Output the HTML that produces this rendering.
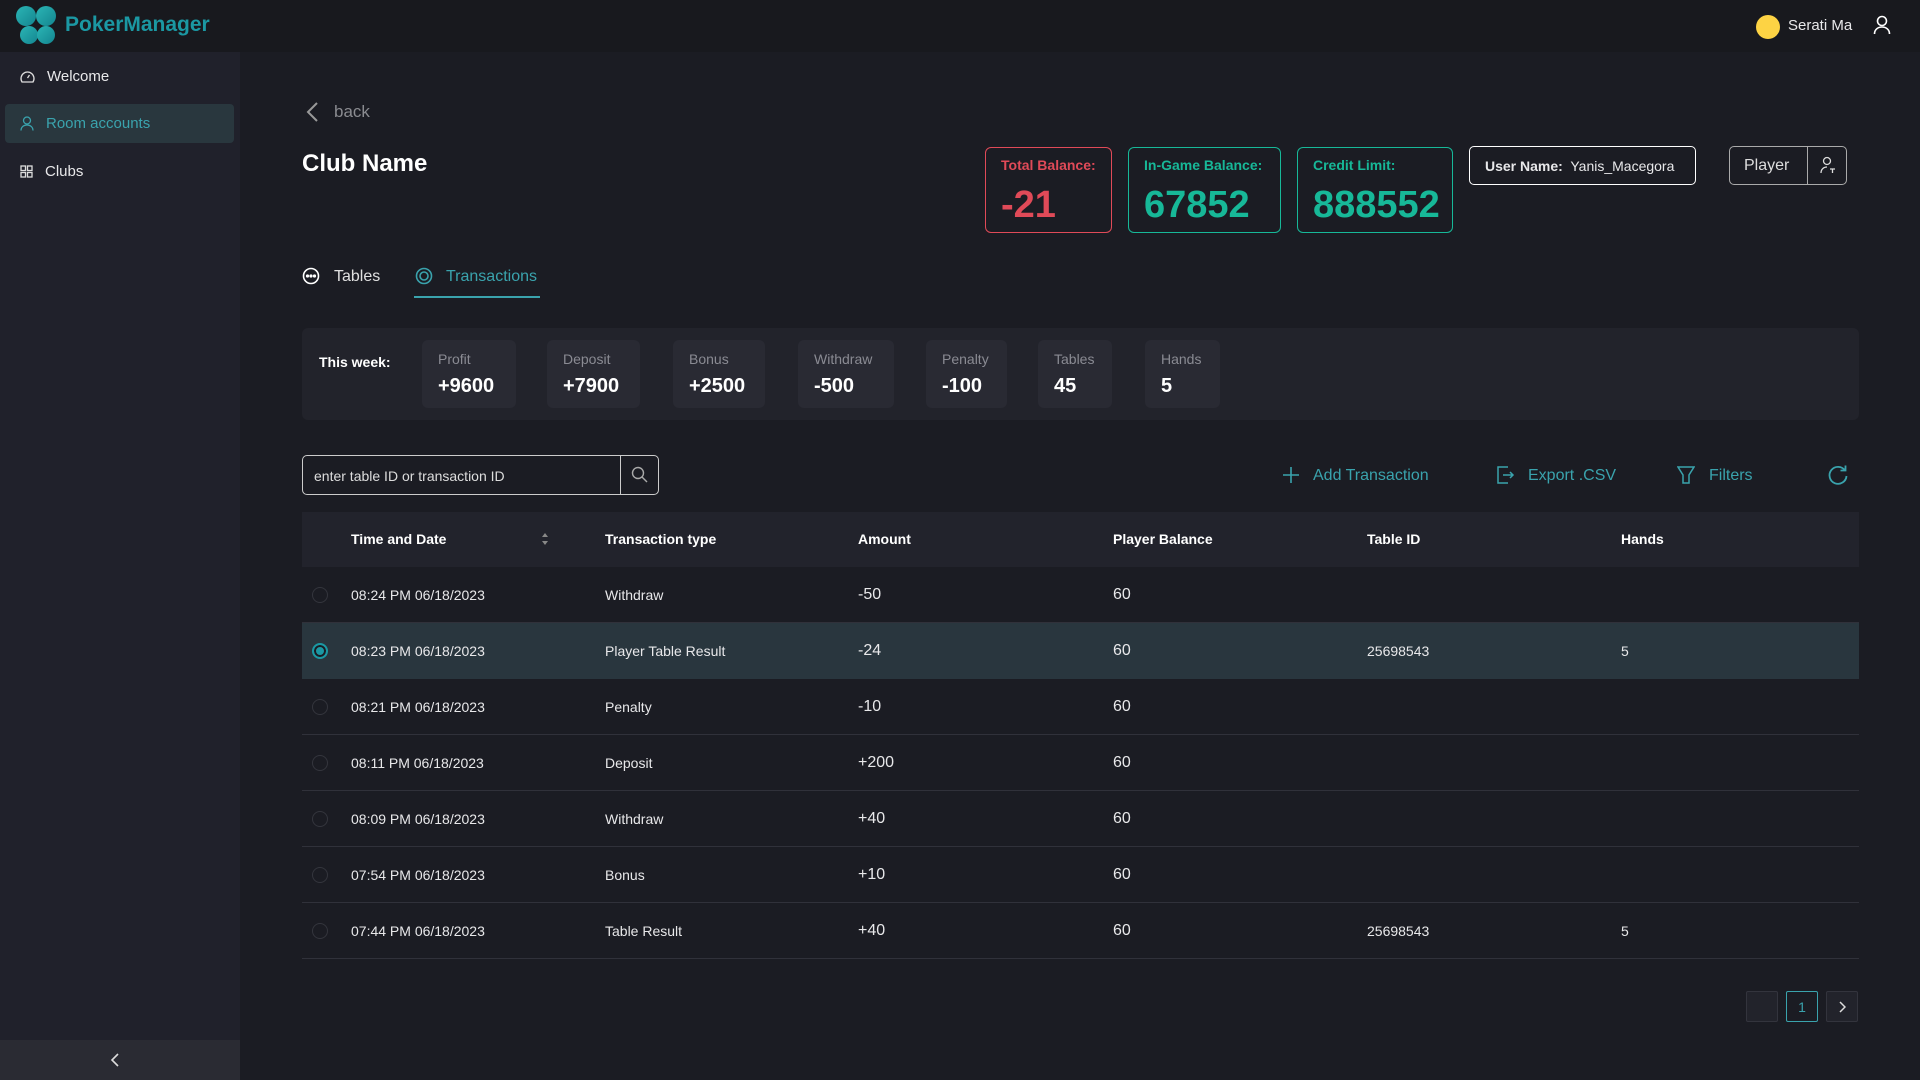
<!DOCTYPE html>
<html><head><meta charset="utf-8"><style>
*{box-sizing:border-box;margin:0;padding:0}
body{width:1920px;height:1080px;overflow:hidden;background:#1b1c23;font-family:"Liberation Sans",sans-serif;color:#e8e8ea;position:relative}
.a{position:absolute}
.hdr{left:0;top:0;width:1920px;height:52px;background:#18191e}
.side{left:0;top:52px;width:240px;height:1028px;background:#20212b}
.nav{left:20px;font-size:15px;display:flex;align-items:center;gap:12px;height:40px}
.card{border-radius:6px;border:1px solid;padding:9px 15px}
.card .l{font-size:14px;font-weight:bold}
.card .v{font-size:38px;font-weight:bold;margin-top:11px}
.stat{top:340px;height:68px;background:#292a33;border-radius:6px;padding:11px 16px}
.stat .l{font-size:14px;color:#8a8b93}
.stat .v{font-size:20px;font-weight:bold;color:#fff;margin-top:8px}
.row{left:302px;width:1557px;height:56px;border-bottom:1px solid #30313a;font-size:14px}
.row span{position:absolute;top:50%;transform:translateY(-50%)}
.rad{left:10px;width:16px;height:16px;border-radius:50%;border:1px solid #34353d}
.teal{color:#3aa3ad}
.pg{top:991px;width:32px;height:31px;border:1px solid #33343d;background:#22232b;border-radius:2px;font-size:14px;display:flex;align-items:center;justify-content:center}
</style></head><body>
<div class="a hdr"></div>
<svg class="a" style="left:15px;top:5px" width="42" height="40" viewBox="0 0 42 40">
<defs><linearGradient id="g" x1="0" y1="0" x2="1" y2="1"><stop offset="0" stop-color="#2bb5b5"/><stop offset="1" stop-color="#13858f"/></linearGradient></defs>
<circle cx="11" cy="11" r="10" fill="url(#g)"/><circle cx="31" cy="11" r="10" fill="url(#g)"/><circle cx="14" cy="30" r="9" fill="url(#g)"/><circle cx="31" cy="30" r="9" fill="url(#g)"/></svg>
<div class="a" style="left:65px;top:13px;font-size:21px;font-weight:bold;color:#1b98a3">PokerManager</div>
<div class="a" style="left:1756px;top:15px;width:24px;height:24px;border-radius:50%;background:#fdd344"></div>
<div class="a" style="left:1788px;top:17px;font-size:15px;color:#e8e8ea">Serati Ma</div>
<svg class="a" style="left:1873px;top:15px" width="18" height="20" viewBox="0 0 18 20" fill="none" stroke="#fff" stroke-width="1.6"><circle cx="9" cy="6" r="4.5"/><path d="M1.5 19c0-4.5 3.5-7 7.5-7s7.5 2.5 7.5 7"/></svg>

<div class="a side"></div>
<div class="a nav" style="top:56px"><svg width="15" height="13" viewBox="0 0 15 13" fill="none" stroke="#ddd" stroke-width="1.3"><path d="M2 12a6.5 6.5 0 1 1 11 0z"/><path d="M7.5 8l2-3"/></svg>Welcome</div>
<div class="a" style="left:5px;top:104px;width:229px;height:39px;background:#29373e;border-radius:4px"></div>
<div class="a nav teal" style="top:103px"><svg width="14" height="15" viewBox="0 0 14 15" fill="none" stroke="#3aa3ad" stroke-width="1.3"><circle cx="7" cy="4.5" r="3.5"/><path d="M1 14.5c0-3.5 2.7-5.5 6-5.5s6 2 6 5.5"/></svg>Room accounts</div>
<div class="a nav" style="top:151px"><svg width="13" height="13" viewBox="0 0 13 13" fill="none" stroke="#ddd" stroke-width="1.3"><rect x="1" y="1" width="4.5" height="4.5"/><rect x="7.5" y="1" width="4.5" height="4.5"/><rect x="1" y="7.5" width="4.5" height="4.5"/><rect x="7.5" y="7.5" width="4.5" height="4.5"/></svg>Clubs</div>
<div class="a" style="left:0;top:1040px;width:240px;height:40px;background:#2a2b33"></div>
<svg class="a" style="left:110px;top:1053px" width="10" height="14" viewBox="0 0 10 14" fill="none" stroke="#ddd" stroke-width="1.6"><path d="M8 1L2 7l6 6"/></svg>

<svg class="a" style="left:305px;top:101px" width="14" height="22" viewBox="0 0 14 22" fill="none" stroke="#999" stroke-width="2"><path d="M12 2L3 11l9 9"/></svg>
<div class="a" style="left:334px;top:102px;font-size:17px;color:#8a8b90">back</div>
<div class="a" style="left:302px;top:150px;font-size:24px;font-weight:bold;color:#fff">Club Name</div>

<div class="a card" style="left:985px;top:147px;width:127px;height:86px;border-color:#e04a58"><div class="l" style="color:#e04a58">Total Balance:</div><div class="v" style="color:#e04a58">-21</div></div>
<div class="a card" style="left:1128px;top:147px;width:153px;height:86px;border-color:#17b898"><div class="l" style="color:#17b898">In-Game Balance:</div><div class="v" style="color:#17b898">67852</div></div>
<div class="a card" style="left:1297px;top:147px;width:156px;height:86px;border-color:#17b898"><div class="l" style="color:#17b898">Credit Limit:</div><div class="v" style="color:#17b898">888552</div></div>
<div class="a" style="left:1469px;top:146px;width:227px;height:39px;border:1px solid #fff;border-radius:5px;font-size:14px;padding:11px 15px;white-space:nowrap"><b>User Name:</b>&nbsp; Yanis_Macegora</div>
<div class="a" style="left:1729px;top:146px;width:118px;height:39px;border:1px solid #aaa;border-radius:5px"></div>
<div class="a" style="left:1807px;top:146px;width:1px;height:39px;background:#aaa"></div>
<div class="a" style="left:1744px;top:157px;font-size:16px;color:#ddd">Player</div>
<svg class="a" style="left:1820px;top:156px" width="16" height="18" viewBox="0 0 16 18" fill="none" stroke="#ddd" stroke-width="1.3"><circle cx="7" cy="5" r="3.5"/><path d="M1 17c0-3.5 2.5-6 6-6M10 13h5M12.5 13v4"/></svg>

<svg class="a" style="left:302px;top:267px" width="18" height="18" viewBox="0 0 18 18" fill="none" stroke="#fff" stroke-width="1.6"><circle cx="9" cy="9" r="7.5"/><circle cx="5.5" cy="9" r=".8" fill="#fff"/><circle cx="9" cy="9" r=".8" fill="#fff"/><circle cx="12.5" cy="9" r=".8" fill="#fff"/></svg>
<div class="a" style="left:334px;top:268px;font-size:16px;color:#e0e0e0">Tables</div>
<svg class="a" style="left:415px;top:267px" width="18" height="18" viewBox="0 0 18 18" fill="none" stroke="#3aa3ad" stroke-width="1.6"><circle cx="9" cy="9" r="7.5"/><circle cx="9" cy="9" r="4"/></svg>
<div class="a teal" style="left:446px;top:268px;font-size:16px">Transactions</div>
<div class="a" style="left:414px;top:296px;width:126px;height:2px;background:#3aa3ad"></div>

<div class="a" style="left:302px;top:328px;width:1557px;height:92px;background:#22232b;border-radius:6px"></div>
<div class="a" style="left:319px;top:354px;font-size:14px;font-weight:bold;color:#fff">This week:</div>
<div class="a stat" style="left:422px;width:94px"><div class="l">Profit</div><div class="v">+9600</div></div>
<div class="a stat" style="left:547px;width:93px"><div class="l">Deposit</div><div class="v">+7900</div></div>
<div class="a stat" style="left:673px;width:92px"><div class="l">Bonus</div><div class="v">+2500</div></div>
<div class="a stat" style="left:798px;width:96px"><div class="l">Withdraw</div><div class="v">-500</div></div>
<div class="a stat" style="left:926px;width:81px"><div class="l">Penalty</div><div class="v">-100</div></div>
<div class="a stat" style="left:1038px;width:74px"><div class="l">Tables</div><div class="v">45</div></div>
<div class="a stat" style="left:1145px;width:75px"><div class="l">Hands</div><div class="v">5</div></div>

<div class="a" style="left:302px;top:455px;width:357px;height:40px;border:1px solid #ccc;border-radius:5px"></div>
<div class="a" style="left:620px;top:455px;width:1px;height:40px;background:#ccc"></div>
<div class="a" style="left:314px;top:468px;font-size:14px;color:#ddd">enter table ID or transaction ID</div>
<svg class="a" style="left:631px;top:466px" width="17" height="17" viewBox="0 0 17 17" fill="none" stroke="#aaa" stroke-width="1.4"><circle cx="7" cy="7" r="5.5"/><path d="M11 11l5 5"/></svg>

<svg class="a" style="left:1282px;top:466px" width="18" height="18" viewBox="0 0 18 18" stroke="#3aa3ad" stroke-width="1.6"><path d="M9 1v16M1 9h16"/></svg>
<div class="a teal" style="left:1313px;top:467px;font-size:16px">Add Transaction</div>
<svg class="a" style="left:1497px;top:466px" width="18" height="18" viewBox="0 0 18 18" fill="none" stroke="#3aa3ad" stroke-width="1.5"><path d="M11 1H1v16h10M6 9h10M13 6l3 3-3 3"/></svg>
<div class="a teal" style="left:1528px;top:467px;font-size:16px">Export .CSV</div>
<svg class="a" style="left:1677px;top:466px" width="18" height="18" viewBox="0 0 18 18" fill="none" stroke="#3aa3ad" stroke-width="1.5"><path d="M1 1h16l-5 8v8H6V9z"/></svg>
<div class="a teal" style="left:1709px;top:467px;font-size:16px">Filters</div>
<svg class="a" style="left:1827px;top:464px" width="22" height="22" viewBox="0 0 22 22" fill="none" stroke="#3aa3ad" stroke-width="1.8"><path d="M18 6.5A8.5 8.5 0 1 0 19.5 12"/><path d="M18.5 1.5v5h-5"/></svg>

<div class="a" style="left:302px;top:512px;width:1557px;height:55px;background:#22232c"></div>
<div class="a" style="left:351px;top:531px;font-size:14px;font-weight:bold;color:#fff">Time and Date</div>
<svg class="a" style="left:541px;top:532px" width="8" height="14" viewBox="0 0 8 14" fill="#888"><path d="M4 1l3 4H1zM4 13l3-4H1z"/></svg>
<div class="a" style="left:605px;top:531px;font-size:14px;font-weight:bold;color:#fff">Transaction type</div>
<div class="a" style="left:858px;top:531px;font-size:14px;font-weight:bold;color:#fff">Amount</div>
<div class="a" style="left:1113px;top:531px;font-size:14px;font-weight:bold;color:#fff">Player Balance</div>
<div class="a" style="left:1367px;top:531px;font-size:14px;font-weight:bold;color:#fff">Table ID</div>
<div class="a" style="left:1621px;top:531px;font-size:14px;font-weight:bold;color:#fff">Hands</div>

<div class="a row" style="top:567px"><span class="rad"></span><span style="left:49px">08:24 PM 06/18/2023</span><span style="left:303px">Withdraw</span><span style="left:556px;font-size:16px">-50</span><span style="left:811px;font-size:16px">60</span></div>
<div class="a row" style="top:623px;background:#29363e;border-bottom-color:#29363e"><span class="rad" style="border:2px solid #1b98a3;background:#1b98a3;box-shadow:inset 0 0 0 2px #1b1c23"></span><span style="left:49px">08:23 PM 06/18/2023</span><span style="left:303px">Player Table Result</span><span style="left:556px;font-size:16px">-24</span><span style="left:811px;font-size:16px">60</span><span style="left:1065px">25698543</span><span style="left:1319px">5</span></div>
<div class="a row" style="top:679px"><span class="rad"></span><span style="left:49px">08:21 PM 06/18/2023</span><span style="left:303px">Penalty</span><span style="left:556px;font-size:16px">-10</span><span style="left:811px;font-size:16px">60</span></div>
<div class="a row" style="top:735px"><span class="rad"></span><span style="left:49px">08:11 PM 06/18/2023</span><span style="left:303px">Deposit</span><span style="left:556px;font-size:16px">+200</span><span style="left:811px;font-size:16px">60</span></div>
<div class="a row" style="top:791px"><span class="rad"></span><span style="left:49px">08:09 PM 06/18/2023</span><span style="left:303px">Withdraw</span><span style="left:556px;font-size:16px">+40</span><span style="left:811px;font-size:16px">60</span></div>
<div class="a row" style="top:847px"><span class="rad"></span><span style="left:49px">07:54 PM 06/18/2023</span><span style="left:303px">Bonus</span><span style="left:556px;font-size:16px">+10</span><span style="left:811px;font-size:16px">60</span></div>
<div class="a row" style="top:903px"><span class="rad"></span><span style="left:49px">07:44 PM 06/18/2023</span><span style="left:303px">Table Result</span><span style="left:556px;font-size:16px">+40</span><span style="left:811px;font-size:16px">60</span><span style="left:1065px">25698543</span><span style="left:1319px">5</span></div>

<div class="a pg" style="left:1746px"></div>
<div class="a pg teal" style="left:1786px;border-color:#3aa3ad;background:transparent">1</div>
<div class="a pg" style="left:1826px"><svg width="8" height="12" viewBox="0 0 8 12" fill="none" stroke="#ddd" stroke-width="1.5"><path d="M2 1l5 5-5 5"/></svg></div>
</body></html>
